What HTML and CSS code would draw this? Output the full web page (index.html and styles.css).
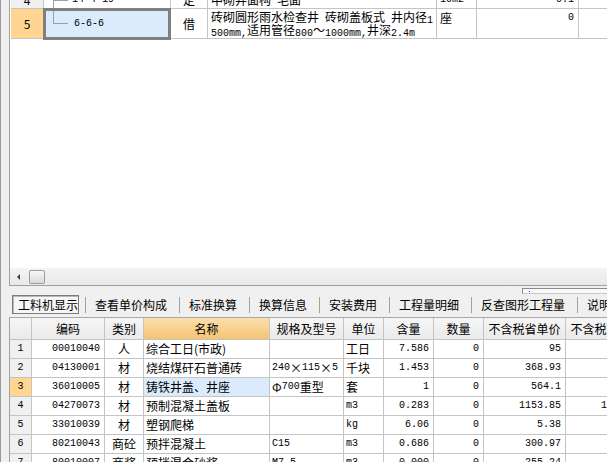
FILE: index.html
```html
<!DOCTYPE html>
<html lang="zh-CN">
<head>
<meta charset="utf-8">
<title>工料机显示</title>
<link rel="stylesheet" href="styles.css">
</head>
<body>
<div class="app">
  <div class="top-pane">
    <div class="grid-view">
      <div class="top-grid">
        <div class="row r4">
          <div class="c num">4</div>
          <div class="c code"><span class="tree-mid"></span><span class="m">14-4-19</span></div>
          <div class="c ctr">定</div>
          <div class="c name">中砌井面构<span class="m">&nbsp;</span>毛面</div>
          <div class="c unit"><span class="m">10m2</span></div>
          <div class="c rt m">0.1</div>
          <div class="c"></div>
        </div>
        <div class="row r5">
          <div class="c num cur">5</div>
          <div class="c code sel"><span class="tree-end"></span><span class="m">6-6-6</span></div>
          <div class="c ctr">借</div>
          <div class="name2">
            <div class="ln">砖砌圆形雨水检查井<span class="m">&nbsp;</span>砖砌盖板式<span class="m">&nbsp;</span>井内径<span class="m">1</span></div>
            <div class="ln"><span class="m">500mm,</span>适用管径<span class="m">800</span>～<span class="m">1000mm,</span>井深<span class="m">2.4m</span></div>
          </div>
          <div class="c unit top">座</div>
          <div class="c rt top m">0</div>
          <div class="c"></div>
        </div>
      </div>
    </div>
    <div class="hscroll">
      <div class="arrow-btn"><span class="tri"></span></div>
      <div class="thumb"></div>
    </div>
  </div>

  <div class="splitter">
    <div class="mini-box"><span class="dot"></span></div>
  </div>

  <div class="tabs">
    <div class="tab sel-tab">工料机显示</div>
    <div class="tab">查看单价构成</div>
    <div class="tab">标准换算</div>
    <div class="tab">换算信息</div>
    <div class="tab">安装费用</div>
    <div class="tab">工程量明细</div>
    <div class="tab">反查图形工程量</div>
    <div class="tab">说明信息</div>
  </div>

  <div class="lower">
    <div class="low-grid">
      <div class="lrow head">
        <div class="h"></div>
        <div class="h">编码</div>
        <div class="h">类别</div>
        <div class="h hot">名称</div>
        <div class="h">规格及型号</div>
        <div class="h">单位</div>
        <div class="h">含量</div>
        <div class="h">数量</div>
        <div class="h">不含税省单价</div>
        <div class="h">不含税市场价</div>
      </div>
      <div class="lrow">
        <div class="d no"><span class="m">1</span></div>
        <div class="d rt m">00010040</div>
        <div class="d ctr">人</div>
        <div class="d lt">综合工日(市政)</div>
        <div class="d lt"></div>
        <div class="d lt">工日</div>
        <div class="d rt m">7.586</div>
        <div class="d rt m">0</div>
        <div class="d rt m">95</div>
        <div class="d rt m">95</div>
      </div>
      <div class="lrow">
        <div class="d no"><span class="m">2</span></div>
        <div class="d rt m">04130001</div>
        <div class="d ctr">材</div>
        <div class="d lt">烧结煤矸石普通砖</div>
        <div class="d lt"><span class="m">240</span>×<span class="m">115</span>×<span class="m">5</span></div>
        <div class="d lt">千块</div>
        <div class="d rt m">1.453</div>
        <div class="d rt m">0</div>
        <div class="d rt m">368.93</div>
        <div class="d rt m">368.93</div>
      </div>
      <div class="lrow">
        <div class="d no cur"><span class="m">3</span></div>
        <div class="d rt m">36010005</div>
        <div class="d ctr">材</div>
        <div class="d lt pick">铸铁井盖、井座</div>
        <div class="d lt">Φ<span class="m">700</span>重型</div>
        <div class="d lt">套</div>
        <div class="d rt m">1</div>
        <div class="d rt m">0</div>
        <div class="d rt m">564.1</div>
        <div class="d rt m">564.1</div>
      </div>
      <div class="lrow">
        <div class="d no"><span class="m">4</span></div>
        <div class="d rt m">04270073</div>
        <div class="d ctr">材</div>
        <div class="d lt">预制混凝土盖板</div>
        <div class="d lt"></div>
        <div class="d lt m">m3</div>
        <div class="d rt m">0.283</div>
        <div class="d rt m">0</div>
        <div class="d rt m">1153.85</div>
        <div class="d rt m">1153.85</div>
      </div>
      <div class="lrow">
        <div class="d no"><span class="m">5</span></div>
        <div class="d rt m">33010039</div>
        <div class="d ctr">材</div>
        <div class="d lt">塑钢爬梯</div>
        <div class="d lt"></div>
        <div class="d lt m">kg</div>
        <div class="d rt m">6.06</div>
        <div class="d rt m">0</div>
        <div class="d rt m">5.38</div>
        <div class="d rt m">5.38</div>
      </div>
      <div class="lrow">
        <div class="d no"><span class="m">6</span></div>
        <div class="d rt m">80210043</div>
        <div class="d ctr">商砼</div>
        <div class="d lt">预拌混凝土</div>
        <div class="d lt m">C15</div>
        <div class="d lt m">m3</div>
        <div class="d rt m">0.686</div>
        <div class="d rt m">0</div>
        <div class="d rt m">300.97</div>
        <div class="d rt m">300.97</div>
      </div>
      <div class="lrow">
        <div class="d no"><span class="m">7</span></div>
        <div class="d rt m">80010007</div>
        <div class="d ctr">商浆</div>
        <div class="d lt">预拌混合砂浆</div>
        <div class="d lt m">M7.5</div>
        <div class="d lt m">m3</div>
        <div class="d rt m">0.000</div>
        <div class="d rt m">0</div>
        <div class="d rt m">255.24</div>
        <div class="d rt m">255.24</div>
      </div>
    </div>
  </div>
</div>
</body>
</html>
```

FILE: styles.css
```css
* { box-sizing: border-box; }
html, body { margin: 0; padding: 0; }
body {
  width: 607px;
  height: 462px;
  overflow: hidden;
  background: #f0f0f0;
  font-family: "Noto Sans CJK SC", sans-serif;
  font-size: 12px;
  color: #000;
}
.m { font-family: "Liberation Mono", "Noto Sans CJK SC", monospace; font-size: 10px; }
.c .m, .d .m, .ln .m { line-height: 8px; vertical-align: -1px; }

.app {
  height: 462px;
  border-left: 1px solid #9a9a9a;
  padding-left: 8px;
  display: flex;
  flex-direction: column;
}

/* ---------- top pane ---------- */
.top-pane {
  height: 286px;
  flex: none;
  border-left: 1px solid #a0a0a0;
  border-bottom: 1px solid #a0a0a0;
  display: flex;
  flex-direction: column;
  background: #fff;
  overflow: hidden;
}
.grid-view { height: 268px; flex: none; overflow: hidden; padding-left: 1px; }
.top-grid { margin-top: -9px; width: max-content; }
.row { display: grid; grid-template-columns: 33px 127px 37px 229px 40px 102px 102px; }
.r4 { height: 18px; }
.r5 { height: 30px; }
.c {
  border-right: 1px solid #c4c4c4;
  border-bottom: 1px solid #c4c4c4;
  display: flex;
  align-items: center;
  white-space: nowrap;
  overflow: hidden;
  line-height: 13px;
}
.c.num { justify-content: center; background: #f0f0f0; }
.c.num.cur { background: #ffd591; }
.c.ctr { justify-content: center; }
.c.rt { justify-content: flex-end; padding-right: 4px; }
.c.name { padding-left: 3px; }
.c.unit { padding-left: 3px; }
.c.top { align-items: flex-start; padding-top: 2px; }
.name2 {
  border-right: 1px solid #c4c4c4;
  border-bottom: 1px solid #c4c4c4;
  padding: 1px 0 0 3px;
  white-space: nowrap;
  overflow: hidden;
}
.ln { height: 13px; line-height: 13px; }
.code { position: relative; overflow: visible; padding-left: 9px; }
.code.sel { background: #dcebfb; }
.code.sel::after {
  content: "";
  position: absolute;
  left: -1px; top: -1px; right: -1px; bottom: -2px;
  border: 3px solid #7f7f7f;
}
.tree-end {
  align-self: flex-start;
  width: 15px;
  height: 15px;
  border-left: 1px solid #a0a0a0;
  border-bottom: 1px solid #a0a0a0;
  margin-right: 6px;
  flex: none;
}
.tree-mid {
  align-self: stretch;
  width: 15px;
  margin-right: 4px;
  flex: none;
  margin-bottom: -1px;
  background:
    linear-gradient(#a0a0a0, #a0a0a0) left top / 1px 100% no-repeat,
    linear-gradient(#a0a0a0, #a0a0a0) left 55% / 100% 1px no-repeat;
}

/* scrollbar */
.hscroll {
  height: 17px;
  flex: none;
  display: flex;
  align-items: center;
  background: linear-gradient(#f4f4f4, #e8e8e8);
}
.arrow-btn { width: 17px; height: 17px; display: flex; align-items: center; padding-left: 7px; }
.tri {
  width: 0; height: 0;
  border-right: 3px solid #404040;
  border-top: 3px solid transparent;
  border-bottom: 3px solid transparent;
}
.thumb {
  margin-left: 2px;
  width: 16px;
  height: 14px;
  border: 1px solid #9c9c9c;
  border-radius: 2px;
  background: linear-gradient(#f7f7f7, #dadada);
}

/* splitter */
.splitter { height: 9px; flex: none; position: relative; }
.mini-box {
  position: absolute;
  left: 513px; top: 2px;
  width: 90px; height: 6px;
  border-top: 1px solid #8a8a8a;
  border-left: 1px solid #8a8a8a;
  border-bottom: 1px solid #c8c8c8;
  background: #f9f9f9;
}
.dot { position: absolute; left: 6px; top: 2px; width: 1px; height: 1px; background: #1c1cc8; }

/* tabs */
.tabs {
  height: 19px;
  flex: none;
  display: flex;
  align-items: center;
  padding-left: 3px;
  white-space: nowrap;
}
.tab {
  height: 16px;
  line-height: 16px;
  border-left: 1px solid #a0a0a0;
  padding: 0 12px 0 9px;
}
.tab.sel-tab {
  height: 19px;
  line-height: 17px;
  width: 70px;
  padding: 0 0 0 5px;
  margin-right: 6px;
  border: 1px solid #7c7c7c;
  background: #f6f6f6;
  box-shadow: inset 1px 1px 0 #b8b8b8;
}

/* lower grid */
.lower {
  margin-top: 3px;
  flex: 1;
  overflow: hidden;
  border-left: 1px solid #a0a0a0;
  border-top: 1px solid #a8a8a8;
  background: #fff;
}
.low-grid { width: max-content; }
.lrow {
  display: grid;
  grid-template-columns: 22px 73px 39px 126px 74px 40px 50px 50px 82px 82px;
  height: 19px;
}
.lrow.head { height: 22px; }
.h, .d {
  border-right: 1px solid #c4c4c4;
  border-bottom: 1px solid #c4c4c4;
  display: flex;
  align-items: center;
  white-space: nowrap;
  overflow: hidden;
  line-height: 14px;
}
.h {
  justify-content: center;
  background: linear-gradient(#f6f6f6, #eaeaea);
}
.h.hot { background: linear-gradient(#fbdfae, #f5c472); }
.d.no { justify-content: center; background: #f0f0f0; }
.d.no.cur { background: #ffd591; }
.d.rt { justify-content: flex-end; padding-right: 4px; }
.d.lt { padding-left: 2px; }
.d.ctr { justify-content: center; }
.d.pick { background: #dcebfb; }
```
